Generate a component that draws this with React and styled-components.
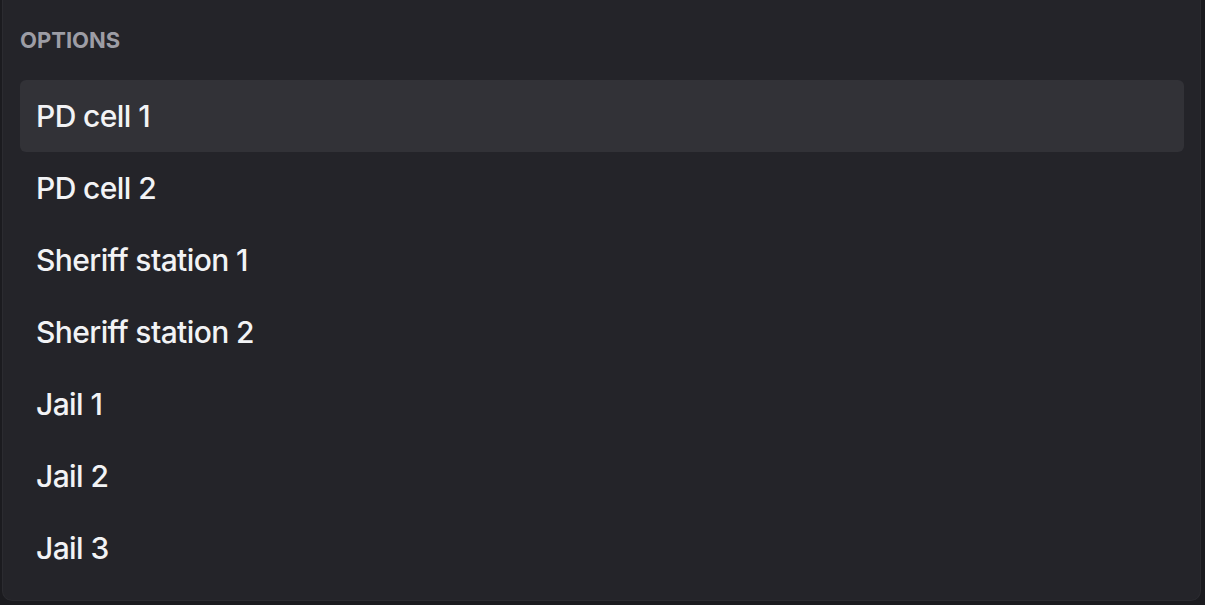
import React from 'react';
import styled, { createGlobalStyle } from 'styled-components';

const GlobalStyle = createGlobalStyle`
  html, body {
    margin: 0;
    padding: 0;
    background: #1b1b1f;
  }
  body {
    font-family: Inter, "Noto Sans", "Liberation Sans", sans-serif;
    -webkit-font-smoothing: antialiased;
  }
`;

const Page = styled.div`
  width: 1205px;
  height: 605px;
  box-sizing: border-box;
  padding: 0 4px 4px 2px;
`;

const Panel = styled.section`
  box-sizing: border-box;
  height: 601px;
  background: #242429;
  border: 1px solid #2b2b30;
  border-top: none;
  border-radius: 0 0 10px 10px;
  padding: 0 16px 0 17px;
  display: flex;
  flex-direction: column;
`;

const Heading = styled.div`
  height: 80px;
  display: flex;
  align-items: center;
  font-size: 22px;
  font-weight: 700;
  color: #9d9da5;
`;

const List = styled.ul`
  list-style: none;
  margin: 0;
  padding: 0;
  display: flex;
  flex-direction: column;
`;

const Option = styled.li`
  height: 72px;
  display: flex;
  align-items: center;
  padding: 0 16px;
  border-radius: 6px;
  background: ${(p) => (p.$active ? '#323237' : 'transparent')};
  color: #f2f3f5;
  font-size: 30px;
  font-weight: 450;
  letter-spacing: -0.6px;
`;

const options = [
  'PD cell 1',
  'PD cell 2',
  'Sheriff station 1',
  'Sheriff station 2',
  'Jail 1',
  'Jail 2',
  'Jail 3',
];

export default function App() {
  return (
    <Page>
      <GlobalStyle />
      <Panel>
        <Heading>OPTIONS</Heading>
        <List>
          {options.map((label, i) => (
            <Option key={label} $active={i === 0}>
              {label}
            </Option>
          ))}
        </List>
      </Panel>
    </Page>
  );
}
